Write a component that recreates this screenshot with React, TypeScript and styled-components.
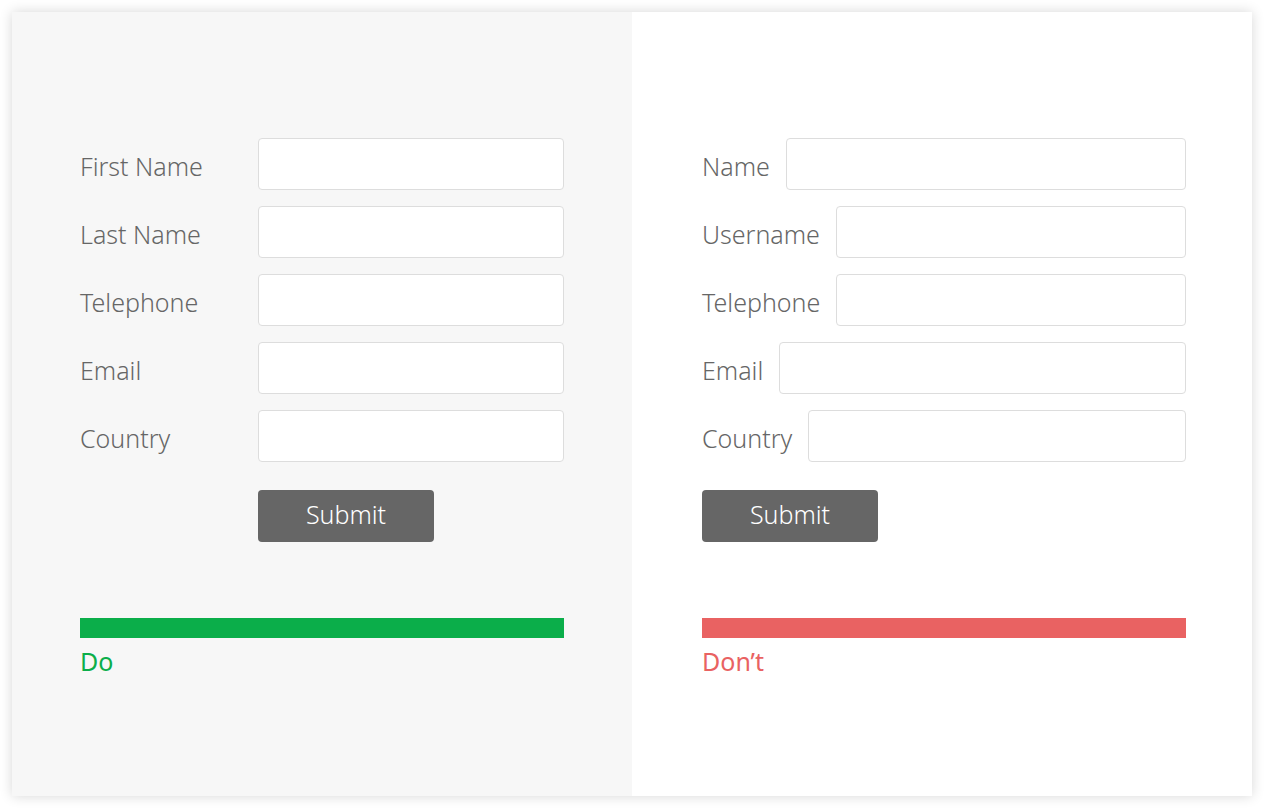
import * as React from 'react';
import styled, { createGlobalStyle } from 'styled-components';

const GlobalStyle = createGlobalStyle`
  html, body {
    margin: 0;
    padding: 0;
    background: #ffffff;
    font-family: "Noto Sans", "Liberation Sans", sans-serif;
  }
`;

const doFields = ['First Name', 'Last Name', 'Telephone', 'Email', 'Country'];
const dontFields = ['Name', 'Username', 'Telephone', 'Email', 'Country'];

const App: React.FC = () => {
  return (
    <S.Page>
      <GlobalStyle />
      <S.Card>
        <S.Panel tone="gray" side="left">
          <S.Form>
            {doFields.map(f => (
              <S.Row key={f}>
                <S.Label fixed>{f}</S.Label>
                <S.Input />
              </S.Row>
            ))}
            <S.Row>
              <S.Spacer />
              <S.Button>Submit</S.Button>
            </S.Row>
          </S.Form>
          <S.Verdict>
            <S.Bar color="#0bae4a" />
            <S.VerdictText color="#0bae4a">Do</S.VerdictText>
          </S.Verdict>
        </S.Panel>
        <S.Panel tone="white" side="right">
          <S.Form>
            {dontFields.map(f => (
              <S.Row key={f}>
                <S.Label>{f}</S.Label>
                <S.Input />
              </S.Row>
            ))}
            <S.Row>
              <S.Button>Submit</S.Button>
            </S.Row>
          </S.Form>
          <S.Verdict>
            <S.Bar color="#e96262" />
            <S.VerdictText color="#e96262">Don’t</S.VerdictText>
          </S.Verdict>
        </S.Panel>
      </S.Card>
    </S.Page>
  );
};

const S = {
  Page: styled.div`
    width: 1264px;
    height: 808px;
    padding: 12px;
    box-sizing: border-box;
  `,
  Card: styled.div`
    display: flex;
    width: 1240px;
    height: 784px;
    box-shadow: 0 0 12px rgba(0, 0, 0, 0.16);
    overflow: hidden;
  `,
  Panel: styled.div<{ tone: 'gray' | 'white'; side: 'left' | 'right' }>`
    flex: 0 0 620px;
    box-sizing: border-box;
    background: ${p => (p.tone === 'gray' ? '#f7f7f7' : '#ffffff')};
    padding: 126px 0 0 ${p => (p.side === 'left' ? '68px' : '70px')};
    display: flex;
    flex-direction: column;
  `,
  Form: styled.div`
    width: 484px;
    display: flex;
    flex-direction: column;
    gap: 16px;
  `,
  Row: styled.div`
    display: flex;
    align-items: center;
    &:last-child {
      margin-top: 12px;
    }
  `,
  Label: styled.label<{ fixed?: boolean }>`
    flex: 0 0 auto;
    width: ${p => (p.fixed ? '178px' : 'auto')};
    margin-right: ${p => (p.fixed ? '0' : '16px')};
    padding-top: 4px;
    font-size: 25px;
    font-weight: 300;
    color: #666666;
    white-space: nowrap;
  `,
  Spacer: styled.div`
    flex: 0 0 178px;
  `,
  Input: styled.input`
    flex: 1 1 auto;
    min-width: 0;
    height: 52px;
    box-sizing: border-box;
    border: 1px solid #dddddd;
    border-radius: 4px;
    background: #ffffff;
    outline: none;
  `,
  Button: styled.button`
    width: 176px;
    height: 52px;
    border: none;
    border-radius: 4px;
    background: #666666;
    color: #ffffff;
    font-family: "Noto Sans", "Liberation Sans", sans-serif;
    font-size: 25px;
    font-weight: 300;
    padding: 0 0 4px;
  `,
  Verdict: styled.div`
    width: 484px;
    margin-top: 76px;
    display: flex;
    flex-direction: column;
  `,
  Bar: styled.div<{ color: string }>`
    height: 20px;
    background: ${p => p.color};
  `,
  VerdictText: styled.div<{ color: string }>`
    margin-top: 4px;
    font-size: 25px;
    font-weight: 400;
    line-height: 38px;
    color: ${p => p.color};
  `,
};

export default App;
